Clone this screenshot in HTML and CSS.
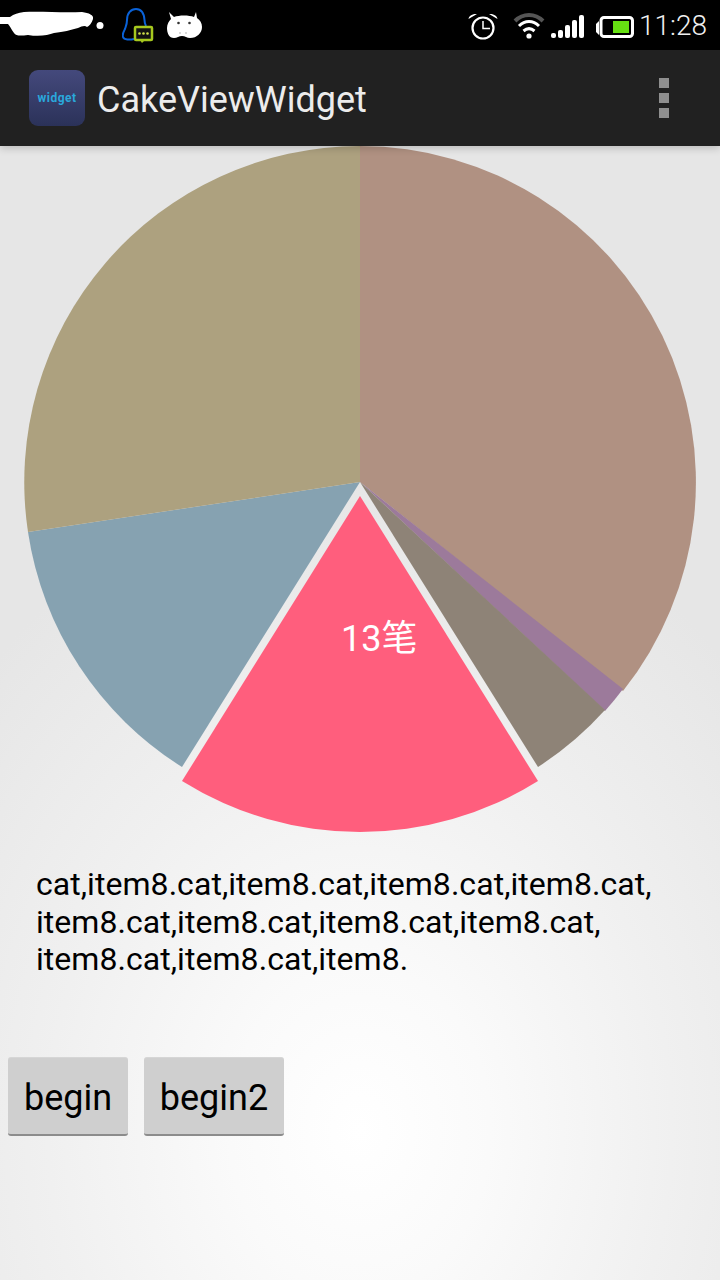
FILE: index.html
```html
<!DOCTYPE html>
<html lang="en">
<head>
    <meta charset="UTF-8">
    <meta name="viewport" content="width=device-width, initial-scale=1.0">
    <title>CakeViewWidget</title>
    <link rel="stylesheet" href="styles.css">
</head>
<body>
    <div class="status-bar">
        <div class="status-left">
            <svg class="scribble" width="106" height="40" viewBox="0 0 106 40">
                <path fill="#fff" d="M0 12 L10 12 C14 9 18 8 24 7 C40 6 62 8 82 7 C89 8 94 10 93 14 C92 18 89 21 87 22 C85 20 82 21 78 23 C70 25 64 27 54 28 C48 30 40 32 28 30 C20 31 16 31 14 28 C11 24 10 21 8 19 L0 19 Z"/>
                <circle fill="#fff" cx="100" cy="20.500" r="3.500"/>
            </svg>
            <svg class="qq" width="32" height="36" viewBox="0 0 32 36">
                <path fill="none" stroke="#0a62d8" stroke-width="2" d="M5 13 C5 6 9 2 14 2 C19 2 22 6 22.500 13 C22.500 15 23 17 24 19 M12 32 C8 33 2 33 1 30 C0 27 2 24 3 22 C4 19 5 17 5 13"/>
                <rect x="13" y="20" width="17" height="13" rx="1" fill="#111" stroke="#a6c81e" stroke-width="2.500"/>
                <path fill="#a6c81e" d="M18 33 L23 33 L20 36 Z"/>
                <circle fill="#cfe04a" cx="17.500" cy="26.500" r="1.300"/>
                <circle fill="#cfe04a" cx="21.500" cy="26.500" r="1.300"/>
                <circle fill="#cfe04a" cx="25.500" cy="26.500" r="1.300"/>
            </svg>
            <svg class="droid" width="35" height="27" viewBox="0 0 35 27">
                <path fill="#fff" d="M2 0 L7 5 C12 3 22 3 27 5 L29 0 L30 6 C33 8 35 11 35 15 C35 21 30 26 23 26 C20 26 18 24 15 24 C12 24 10 26 7 26 C2 26 0 21 0 16 C0 12 2 9 4 7 Z"/>
                <circle fill="#333" cx="11.500" cy="11" r="1.300"/>
                <circle fill="#333" cx="22.500" cy="11" r="1.300"/>
                <circle fill="#ccc" cx="13" cy="21" r="1"/>
                <circle fill="#ccc" cx="19" cy="21" r="1"/>
            </svg>
        </div>
        <div class="status-right">
            <svg class="alarm" width="30" height="30" viewBox="0 0 30 30">
                <circle cx="15" cy="18" r="10.500" fill="none" stroke="#fff" stroke-width="2.200"/>
                <path fill="none" stroke="#fff" stroke-width="1.500" d="M15 11 V18.500 H22"/>
                <path fill="#fff" d="M0.500 9 C1 6 4 3.500 9 4 Z M29.500 9 C29 6 26 3.500 21 4 Z"/>
            </svg>
            <svg class="wifi" width="32" height="30" viewBox="0 0 32 30">
                <path fill="none" stroke="#555" stroke-width="4" d="M2 11 C10 3 22 3 30 11"/>
                <path fill="none" stroke="#fff" stroke-width="3" d="M6 16 C12 10 20 10 26 16"/>
                <path fill="none" stroke="#fff" stroke-width="3" d="M10.500 21 C14 18 18 18 21.500 21"/>
                <circle cx="16" cy="26" r="2.600" fill="#fff"/>
            </svg>
            <div class="signal">
                <span class="bar bar-1"></span>
                <span class="bar bar-2"></span>
                <span class="bar bar-3"></span>
                <span class="bar bar-4"></span>
                <span class="bar bar-5"></span>
            </div>
            <svg class="battery" width="38" height="24" viewBox="0 0 38 24">
                <path fill="#fff" d="M0 8 L3 5 V19 L0 16 Z"/>
                <rect x="5" y="1.500" width="31.500" height="19" rx="3" fill="none" stroke="#fff" stroke-width="3"/>
                <rect x="17" y="5" width="16" height="12" fill="#66e012"/>
            </svg>
            <span class="clock">11:28</span>
        </div>
    </div>

    <div class="action-bar">
        <div class="app-icon">widget</div>
        <h1 class="app-title">CakeViewWidget</h1>
        <div class="overflow-menu">
            <span></span>
            <span></span>
            <span></span>
        </div>
    </div>

    <svg class="pie" width="720" height="700" viewBox="0 146 720 700">
        <path fill="#b09182" d="M360 482 L360 146 A336 336 0 0 1 623 691 Z"/>
        <path fill="#9c7a9b" d="M360 482 L623 689 A336 336 0 0 1 605 711 Z"/>
        <path fill="#8e8377" d="M360 482 L605 710 A336 336 0 0 1 538 767 Z"/>
        <path fill="#86a2b1" d="M360 482 L182 767 A336 336 0 0 1 28 532 Z"/>
        <path fill="#ada17f" d="M360 482 L28 532 A336 336 0 0 1 360 146 Z"/>
        <path fill="#ff5e7d" d="M360 496 L538 781 A336 336 0 0 1 182 781 Z"/>
        <text class="pie-label" x="341" y="651">13笔</text>
    </svg>

    <p class="note">cat,item8.cat,item8.cat,item8.cat,item8.cat,<br>item8.cat,item8.cat,item8.cat,item8.cat,<br>item8.cat,item8.cat,item8.</p>

    <div class="buttons">
        <button class="btn btn-begin" type="button">begin</button>
        <button class="btn btn-begin2" type="button">begin2</button>
    </div>
</body>
</html>
```

FILE: styles.css
```css
html, body {
    height: 100%;
}
body {
    font-family: Roboto, "Noto Sans CJK SC", sans-serif;
    background: radial-gradient(ellipse 520px 660px at 360px 1130px, #ffffff 0%, #fafafa 25%, #f0f0f0 60%, #e6e6e6 100%);
    background-color: #e6e6e6;
    color: #000;
    margin: 0;
    overflow: hidden;
}
.status-bar {
    height: 50px;
    background-color: #000;
    display: flex;
    justify-content: space-between;
    align-items: center;
}
.status-left {
    display: flex;
    align-items: center;
    gap: 13px;
}
.scribble {
    margin-right: 3px;
}
.droid {
    margin-top: 1px;
}
.status-right {
    display: flex;
    align-items: center;
    padding-right: 12px;
}
.wifi {
    margin-left: 15px;
}
.signal {
    display: flex;
    align-items: flex-end;
    gap: 2px;
    height: 23px;
    margin-left: 6px;
    margin-top: 3px;
}
.bar {
    width: 5px;
    background-color: #fff;
    border-radius: 2px;
}
.bar-1 { height: 5px; }
.bar-2 { height: 8px; }
.bar-3 { height: 13px; }
.bar-4 { height: 18px; }
.bar-5 { height: 23px; }
.battery {
    margin-left: 12px;
    margin-top: 6px;
}
.clock {
    color: #f0f0f0;
    font-size: 28px;
    font-weight: 300;
    margin-left: 5px;
    margin-right: 1px;
}
.action-bar {
    height: 96px;
    background-color: #212121;
    box-shadow: 0 2px 8px rgba(0, 0, 0, 0.2);
    display: flex;
    align-items: center;
    padding: 0 51px 0 29px;
    position: relative;
}
.app-icon {
    width: 56px;
    height: 56px;
    border-radius: 9px;
    background: linear-gradient(#44497c, #2b3259);
    color: #2aa8dc;
    font-size: 12px;
    font-weight: 700;
    letter-spacing: 0.5px;
    display: flex;
    align-items: center;
    justify-content: center;
}
.app-title {
    color: #ececec;
    font-size: 36px;
    font-weight: 400;
    margin: 4px 0 0 12px;
    flex: 1;
}
.overflow-menu {
    display: flex;
    flex-direction: column;
    gap: 5px;
}
.overflow-menu span {
    width: 10px;
    height: 10px;
    background-color: #8f8f8f;
}
.pie {
    display: block;
}
.pie-label {
    fill: #fff;
    font-size: 36px;
}
.note {
    font-size: 32px;
    line-height: 37.5px;
    letter-spacing: 0.05px;
    margin: 20px 0 0 36px;
}
.buttons {
    display: flex;
    gap: 16px;
    margin: 78px 0 0 8px;
}
.btn {
    height: 79px;
    padding: 5px 0 0;
    font-family: inherit;
    font-size: 36px;
    color: #000;
    background-color: #cfcfcf;
    border: none;
    border-top: 1px solid #d6d6d6;
    border-bottom: 2px solid #8c8c8c;
    border-radius: 3px;
}
.btn-begin {
    width: 120px;
}
.btn-begin2 {
    width: 140px;
}
```
